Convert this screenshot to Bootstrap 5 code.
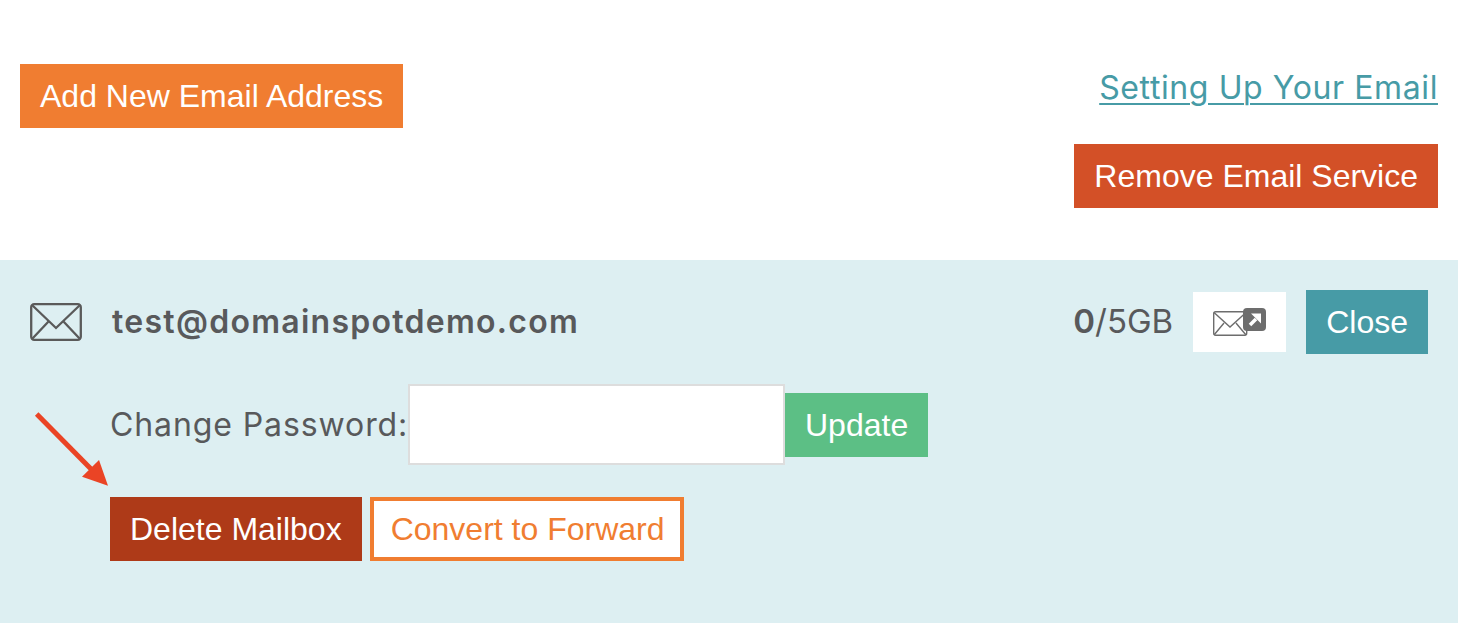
<!DOCTYPE html>
<html lang="en"><head><meta charset="utf-8">
<link href="https://cdn.jsdelivr.net/npm/bootstrap@5.3.0/dist/css/bootstrap.min.css" rel="stylesheet">
<style>
html,body{height:100%;overflow:hidden;background:#fff}
body{font-family:"Liberation Sans",Arial,sans-serif;color:#58595b}
.pg{width:1458px}
.topbar{padding:64px 20px 52px 20px}
.sq{border:0;border-radius:0;color:#fff;font-family:"Liberation Sans",Arial,sans-serif;font-size:32px;line-height:64px;height:64px;padding:0 20px;display:inline-block;white-space:nowrap}
.sq:hover{color:#fff}
.bo{background:#f07d31}.br{background:#d35027;padding:0 20px}.bt{background:#479ba6}
.bg1{background:#5cbf85}.bd1{background:#ae3a18}
.bf{background:#fff;border:4px solid #f07d31;color:#f07d31;line-height:56px;height:64px;padding:0 15px 0 17px;margin-left:8px}
.bf:hover{color:#f07d31}
.help{font-family:"Inter",sans-serif;font-size:32px;letter-spacing:.6px;line-height:48px;color:#479ba6;margin-bottom:32px;text-decoration:underline;text-underline-offset:4px;text-decoration-thickness:2px;white-space:nowrap}
.panel{background:#ddeff2;height:363px;padding:30px 30px 0 30px}
.ico{width:52px;height:38px}
.mail{font-family:"Inter",sans-serif;font-weight:600;font-size:32px;letter-spacing:1.28px;margin-left:30px;color:#58595b}
.quota{font-size:33px;margin-right:20px;font-family:"Inter",sans-serif}
.quota b{font-weight:600}
.fwd{width:93px;height:60px;background:#fff;margin-right:20px}
.sub{padding:30px 0 0 80px}
.lbl{font-family:"Inter",sans-serif;font-size:32px;letter-spacing:.9px;color:#58595b;margin:0;width:298px;white-space:nowrap}
.pwd{width:377px;height:81px;border:2px solid #ddd;background:#fff;outline:0;border-radius:0}
.acts{margin-top:32px;padding-left:80px}
.arw{position:absolute;left:30px;top:410px;width:85px;height:80px}
</style></head><body>
<div class="pg position-relative">
<div class="topbar d-flex justify-content-between align-items-start">
<a class="sq bo text-decoration-none" href="#">Add New Email Address</a>
<div class="d-flex flex-column align-items-end">
<a class="help" href="#">Setting Up Your Email</a>
<a class="sq br text-decoration-none" href="#">Remove Email Service</a>
</div></div>
<div class="panel">
<div class="d-flex align-items-center">
<svg class="ico" viewBox="0 0 52 38" fill="none" stroke="#5a5a5a" stroke-width="2.300"><rect x="1.200" y="1.200" width="49.600" height="35.600" rx="3"/><path d="M2 2 L26 25 L50 2M2 36 L19 18M50 36 L33 18"/></svg>
<span class="mail">test@domainspotdemo.com</span>
<div class="ms-auto d-flex align-items-center">
<span class="quota"><b>0</b>/5GB</span>
<span class="fwd d-flex align-items-center justify-content-center"><svg width="53" height="28" viewBox="0 0 53 28"><rect x="0.700" y="3.700" width="33" height="23.600" rx="2" fill="#fff" stroke="#6d6d6d" stroke-width="1.400"/><path d="M1 4.500 L17 19 L33 4.500M1 27 L11 15M33 27 L23 15" fill="none" stroke="#6d6d6d" stroke-width="1.400"/><rect x="30" y="0" width="23" height="23" rx="4" fill="#6d6d6d"/><path d="M37 17 L43 11" stroke="#fff" stroke-width="3.500"/><path d="M38 5.500 H48 V15.500 Z" fill="#fff"/></svg></span>
<a class="sq bt text-decoration-none" href="#">Close</a>
</div></div>
<div class="sub d-flex align-items-center">
<p class="lbl">Change Password:</p><input class="pwd" type="password" aria-label="Change Password">
<a class="sq bg1 text-decoration-none" href="#">Update</a>
</div>
<div class="acts d-flex">
<a class="sq bd1 text-decoration-none" href="#">Delete Mailbox</a>
<a class="sq bf text-decoration-none" href="#">Convert to Forward</a>
</div>
</div>
<svg class="arw" viewBox="0 0 85 80"><path d="M6.700 4 L62 60" stroke="#ea4425" stroke-width="5" fill="none"/><path d="M78 75.700 L52 66.700 L69 50 Z" fill="#ea4425"/></svg>
</div>
<script src="https://cdn.jsdelivr.net/npm/bootstrap@5.3.0/dist/js/bootstrap.bundle.min.js"></script>
</body></html>
